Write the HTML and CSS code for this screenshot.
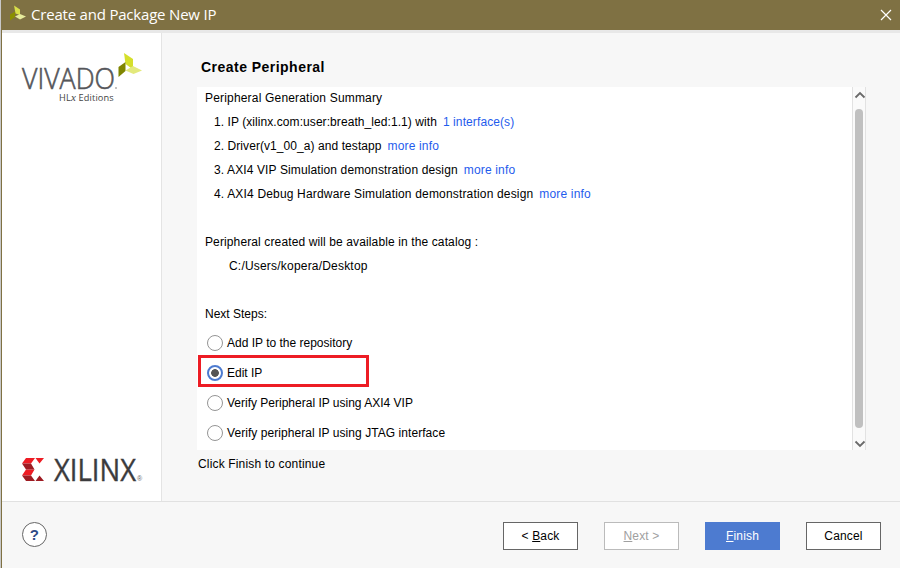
FILE: index.html
```html
<!DOCTYPE html>
<html lang="en">
<head>
<meta charset="utf-8">
<title>Create and Package New IP</title>
<link rel="stylesheet" href="styles.css">
</head>
<body>
<div class="window">
  <header class="titlebar">
    <svg class="app-icon" width="16" height="16" viewBox="0 0 16 16"><path fill="#d9e04a" d="m4 .5 6 4V10l-4.500-1.500z"/><path fill="#8a8f00" d="m0 9.500 5-3V12l-5 3.500z"/><path fill="#e6eb9c" d="M5 11.500 10 9l6 2.500-6 3z"/></svg>
    <h1>Create and Package New IP</h1>
    <svg class="close" width="12" height="12" viewBox="0 0 12 12"><path d="m1 1 10 10M11 1 1 11" fill="none" stroke="#fff" stroke-width="1.2"/></svg>
  </header>
  <div class="main">
    <aside class="side">
      <svg class="vivado" width="122" height="52" viewBox="0 0 122 52">
        <text class="word" x="0" y="36.500" textLength="93" lengthAdjust="spacingAndGlyphs">VIVADO</text>
        <circle cx="94" cy="36" r=".8" fill="#777"/>
        <text class="sub" x="37" y="48.500">HL<tspan class="x">x</tspan> Editions</text>
        <path fill="#d5df2b" d="m102 1 9 6v10.500L103.500 12z"/><path fill="#7f8500" d="m96.500 15 7-5v9l-7 6z"/><path fill="#e3e97c" d="m103.500 18.500 7.500-4.500 9 4.500-8.500 3.500z"/>
      </svg>
      <svg class="xilinx" width="122" height="28" viewBox="0 0 122 28">
        <path fill="#ed1c24" d="M4 2h9L9 7.500H0zM13.500 2H22l-4.500 5.500zM4 13.500h8.500L9 19.500H0z"/>
        <path fill="#9e1b22" d="M0 7.500h9l3.500 6H4zM0 19.500h9l4 5.500H4zM13.500 25H22l-4.500-5.500z"/>
        <text class="xword" x="32" y="25" textLength="82" lengthAdjust="spacingAndGlyphs">XILINX</text>
        <text class="reg" x="115" y="25">®</text>
      </svg>
    </aside>
    <main class="content">
      <h2>Create Peripheral</h2>
      <div class="pane">
        <div class="summary">
          <p>Peripheral Generation Summary</p>
          <ol>
            <li><span class="l1">1. IP (xilinx.com:user:breath_led:1.1) with</span><a class="n1">1 interface(s)</a></li>
            <li><span class="l2">2. Driver(v1_00_a) and testapp</span><a>more info</a></li>
            <li><span class="l3">3. AXI4 VIP Simulation demonstration design</span><a>more info</a></li>
            <li><span class="l4">4. AXI4 Debug Hardware Simulation demonstration design</span><a>more info</a></li>
          </ol>
          <p class="catalog">Peripheral created will be available in the catalog :</p>
          <p class="path">C:/Users/kopera/Desktop</p>
          <p class="next">Next Steps:</p>
          <div class="options">
            <label class="opt"><i class="radio"></i><span class="o1">Add IP to the repository</span></label>
            <label class="opt marked"><i class="radio on"></i><span class="o1">Edit IP</span></label>
            <label class="opt"><i class="radio"></i><span class="o1">Verify Peripheral IP using AXI4 VIP</span></label>
            <label class="opt"><i class="radio"></i><span class="o4">Verify peripheral IP using JTAG interface</span></label>
          </div>
        </div>
        <div class="scroll">
          <svg width="12" height="8" viewBox="0 0 12 8"><path d="M1.500 6.500 6 2l4.500 4.500" fill="none" stroke="#6a6a6a" stroke-width="1.800"/></svg>
          <div class="thumb"></div>
          <svg width="12" height="8" viewBox="0 0 12 8"><path d="M1.500 1.500 6 6l4.500-4.500" fill="none" stroke="#6a6a6a" stroke-width="1.800"/></svg>
        </div>
      </div>
      <p class="hint">Click Finish to continue</p>
    </main>
  </div>
  <footer class="footer">
    <button class="help">?</button>
    <div class="buttons">
      <button class="btn">&lt; <u>B</u>ack</button>
      <button class="btn off"><u>N</u>ext &gt;</button>
      <button class="btn primary"><u>F</u>inish</button>
      <button class="btn">Cancel</button>
    </div>
  </footer>
</div>
</body>
</html>
```
FILE: styles.css
```css
* { box-sizing: border-box; }
body, h1, h2, p, ol { margin: 0; padding: 0; }
body {
  width: 900px; height: 568px; overflow: hidden;
  background: #c8c8c8;
  font: 12px/24px "Liberation Sans", Arial, sans-serif;
  letter-spacing: .16px; color: #000;
}
.window {
  height: 568px; margin-left: 1px; border-left: 1px solid #7f7143;
  background: #f7f7f7; display: flex; flex-direction: column;
}
.titlebar {
  height: 33px; flex: none; display: flex; align-items: center;
  background: #7f7143; border-bottom: 3px solid #e8e8e8; padding: 0 8px;
}
.app-icon { margin: -4px 5px 0 0; }
h1 { font: 400 15px/28px "Open Sans", "Noto Sans", sans-serif; letter-spacing: -.2px; color: #fff; flex: 1; margin-top: -3px; }
.close { margin-top: -1px; }
.main { display: flex; height: 469px; flex: none; border-bottom: 1px solid #e1e1e1; }
.side {
  width: 160px; background: #fff; border-right: 1px solid #e4e4e4;
  padding: 19px 0 17px 20px; display: flex; flex-direction: column; justify-content: space-between;
}
.side svg { overflow: visible; }
.word { font: 300 29px "Open Sans", sans-serif; letter-spacing: 0; fill: #55565a; stroke: #55565a; stroke-width: .6px; }
.sub { font: 400 9.200px "Open Sans", sans-serif; letter-spacing: .15px; fill: #444; }
.x { font-family: "Liberation Serif", serif; font-style: italic; font-size: 11px; }
.xword { font: 400 31px "Open Sans", sans-serif; letter-spacing: 0; fill: #3b3b3d; stroke: #3b3b3d; stroke-width: .4px; }
.reg { font: 7px "Liberation Sans", sans-serif; letter-spacing: 0; fill: #666; }
.content { flex: 1; padding: 24px 34px 0 35px; }
h2 { font-size: 14px; line-height: 20px; letter-spacing: .47px; padding-left: 4px; }
.pane { display: flex; height: 363px; margin-top: 10px; background: #fff; }
.summary { flex: 1; padding: 0 0 0 8px; line-height: 24px; }
.summary > p:first-child { line-height: 22px; height: 23px; letter-spacing: .18px; }
ol { list-style: none; padding-left: 9px; }
li { display: flex; gap: 6px; height: 24px; white-space: pre; }
.l1 { letter-spacing: .07px; }
.n1 { letter-spacing: .1px; }
.l2 { letter-spacing: .07px; }
.l3 { letter-spacing: .12px; }
.l4 { letter-spacing: .17px; }
a { color: #1f5ced; }
.catalog { margin-top: 24px; letter-spacing: .12px; }
.path { padding-left: 24px; letter-spacing: .2px; }
.next { margin-top: 24px; letter-spacing: 0; }
.options { margin-left: -7px; }
.opt { height: 30px; display: flex; align-items: center; gap: 4px; padding: 4px 0 0 9px; }
.o1 { letter-spacing: 0; }
.o4 { letter-spacing: .06px; }
.marked { width: 171px; height: 32px; margin: -1px 0; border: 3px solid #ed1c24; padding: 4px 0 0 6px; }
.radio { width: 16px; height: 16px; border: 1px solid #959595; border-radius: 50%; background: #fff; }
.radio.on { border: 2px solid #4d7bd0; background: radial-gradient(circle, #555 0 3.500px, #fff 4.200px); }
.scroll {
  width: 14px; background: #fafafa; border: solid #e2e2e2; border-width: 0 1px;
  display: flex; flex-direction: column; align-items: center; padding: 4px 0 2px;
}
.scroll svg { flex: none; position: relative; left: 1px; }
.thumb { flex: 1; width: 8px; margin: 10px 0 12px; border-radius: 4px; background: #c0c0c0; }
.hint { padding-left: 1px; margin-top: 3px; line-height: 22px; }
.footer { flex: 1; display: flex; justify-content: space-between; padding: 20px 19px 0 20px; }
button { font: inherit; line-height: 24px; letter-spacing: inherit; padding: 0; }
.help {
  width: 25px; height: 25px; border: 1px solid #666; border-radius: 50%; background: #fff;
  font: bold 15px/23px "Liberation Sans", sans-serif; color: #2f4b86;
}
.buttons { display: flex; gap: 26px; }
.btn { width: 75px; height: 28px; border: 1px solid #666; background: #fff; color: #000; }
.off { border-color: #bbb; color: #a0a0a0; }
.primary { border-color: #4d7bd0; background: #4d7bd0; color: #fff; }
```
